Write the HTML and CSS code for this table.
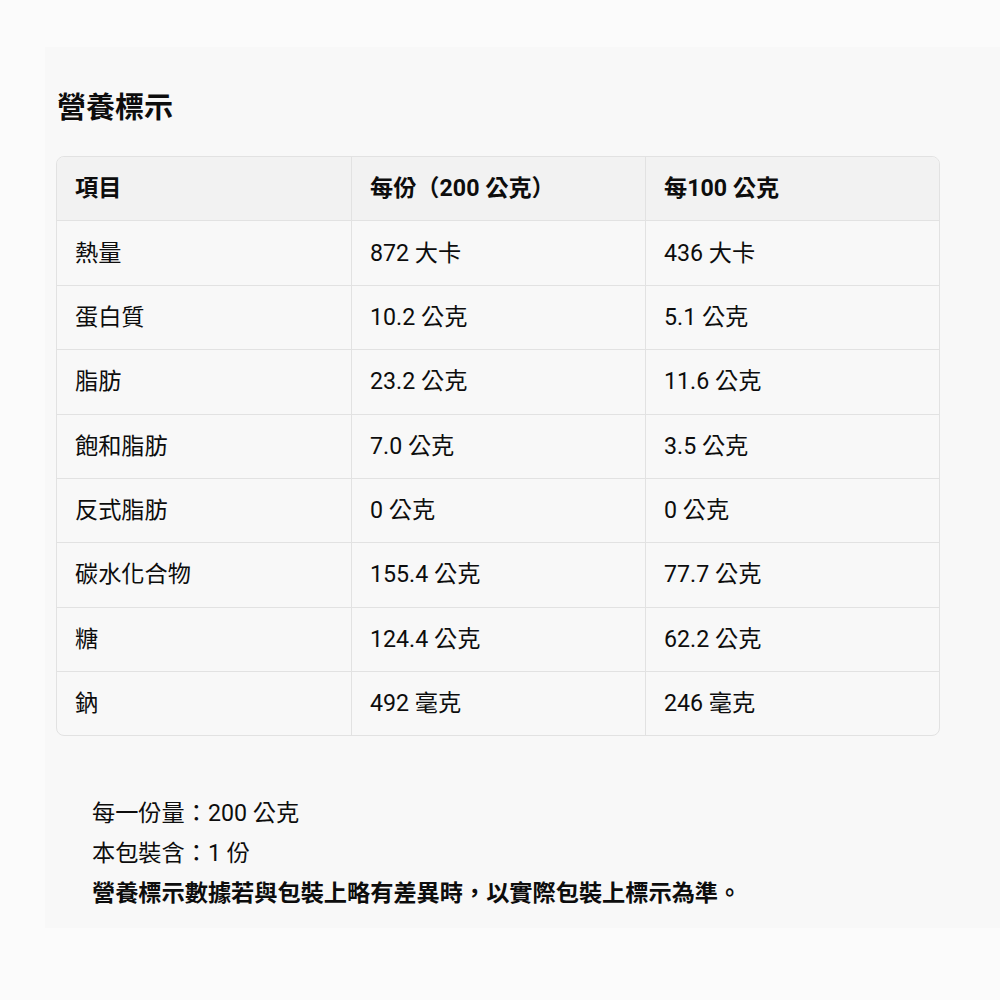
FILE: index.html
```html
<!DOCTYPE html>
<html lang="zh-Hant">
<head>
<meta charset="utf-8">
<title>營養標示</title>
<link rel="stylesheet" href="styles.css">
</head>
<body>
<main class="panel">
  <h1 class="title">營養標示</h1>
  <table class="nutri">
    <thead>
      <tr><th>項目</th><th>每份（200 公克）</th><th>每100 公克</th></tr>
    </thead>
    <tbody>
      <tr><td>熱量</td><td>872 大卡</td><td>436 大卡</td></tr>
      <tr><td>蛋白質</td><td>10.2 公克</td><td>5.1 公克</td></tr>
      <tr><td>脂肪</td><td>23.2 公克</td><td>11.6 公克</td></tr>
      <tr><td>飽和脂肪</td><td>7.0 公克</td><td>3.5 公克</td></tr>
      <tr><td>反式脂肪</td><td>0 公克</td><td>0 公克</td></tr>
      <tr><td>碳水化合物</td><td>155.4 公克</td><td>77.7 公克</td></tr>
      <tr><td>糖</td><td>124.4 公克</td><td>62.2 公克</td></tr>
      <tr><td>鈉</td><td>492 毫克</td><td>246 毫克</td></tr>
    </tbody>
  </table>
  <div class="notes">
    <p class="note">每一份量：200 公克</p>
    <p class="note">本包裝含：1 份</p>
    <p class="note strong">營養標示數據若與包裝上略有差異時，以實際包裝上標示為準。</p>
  </div>
</main>
</body>
</html>
```

FILE: styles.css
```css
html, body {
  margin: 0;
  padding: 0;
  background: #fbfbfb;
}
body {
  font-family: Roboto, "Noto Sans CJK TC", sans-serif;
  color: #0d0d0d;
  height: 1000px;
}
.panel {
  margin: 47px 0 0 45px;
  padding: 38px 60px 15px 11px;
  background: #f8f8f8;
}
.title {
  margin: 0 0 31px 1px;
  font-family: "Noto Sans CJK TC", sans-serif;
  font-size: 29px;
  line-height: 40px;
  font-weight: 700;
}
.nutri {
  width: 884px;
  table-layout: fixed;
  border-collapse: separate;
  border-spacing: 0;
  border: 1px solid #e2e2e2;
  border-radius: 8px;
  overflow: hidden;
  font-size: 23.2px;
}
.nutri th,
.nutri td {
  text-align: left;
  padding: 18.2px 18px 18.2px 18px;
  line-height: 27px;
  border-bottom: 1px solid #e2e2e2;
  border-left: 1px solid #e2e2e2;
  white-space: nowrap;
}
.nutri th:first-child,
.nutri td:first-child {
  border-left: none;
  padding-left: 18px;
}
.nutri tbody tr:last-child td {
  border-bottom: none;
}
.nutri th {
  background: #f2f2f2;
  font-weight: 700;
}
.nutri td {
  font-weight: 400;
}
.notes {
  margin-top: 57px;
  padding-left: 36px;
}
.note {
  margin: 0;
  font-size: 23.2px;
  line-height: 40px;
}
.strong {
  font-weight: 700;
}
```
